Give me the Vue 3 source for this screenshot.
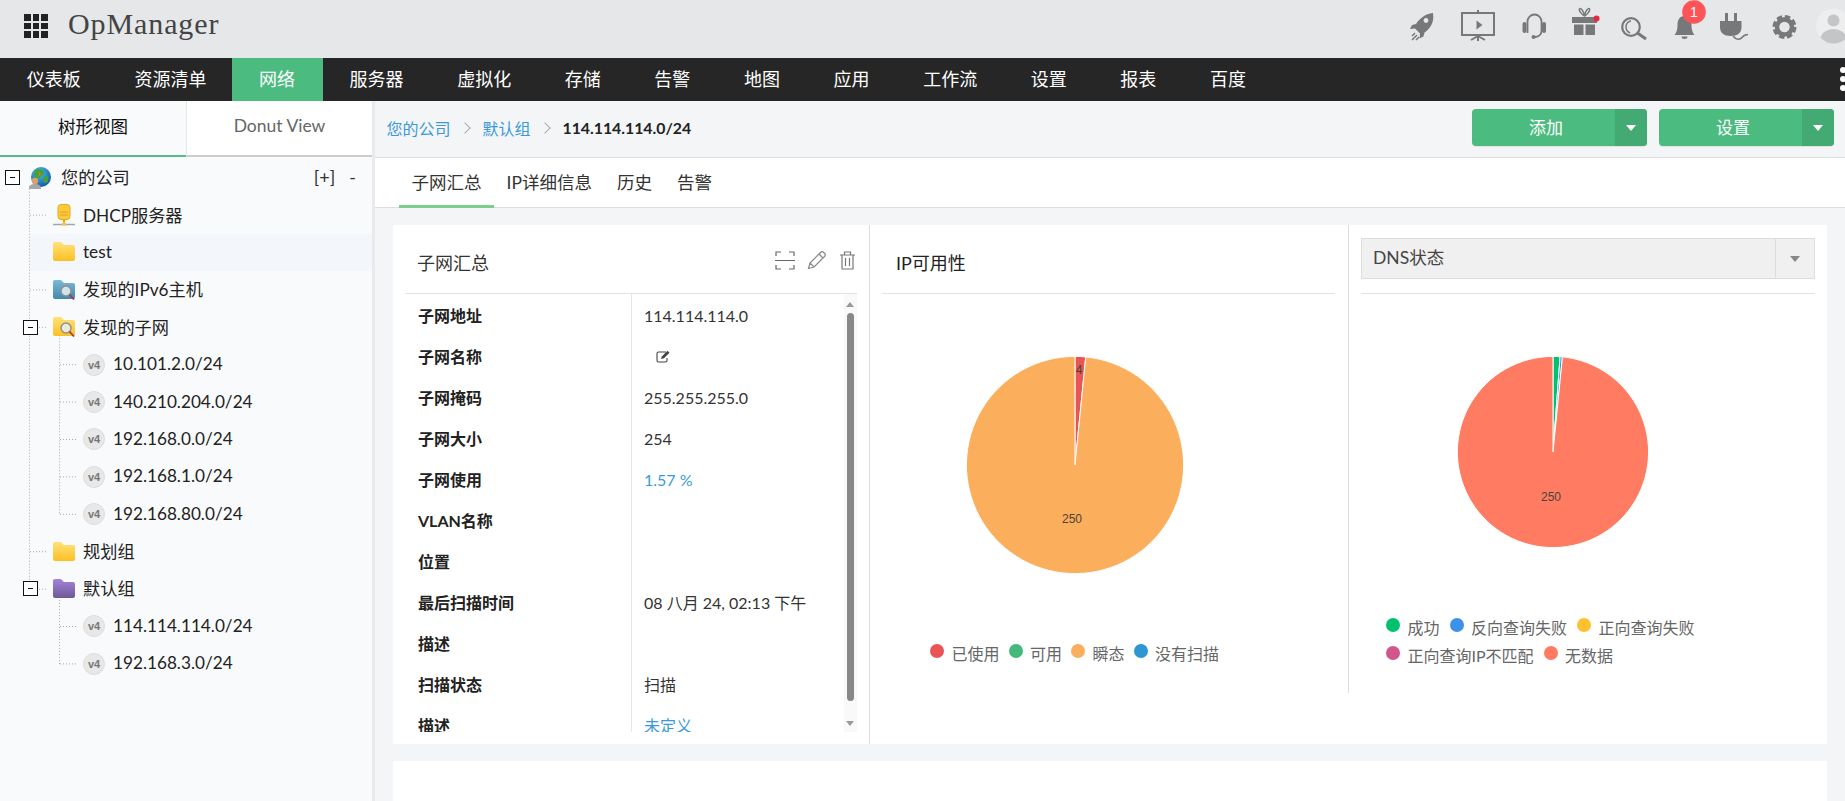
<script setup>
const navItems = ['仪表板','资源清单','网络','服务器','虚拟化','存储','告警','地图','应用','工作流','设置','报表','百度']
const RH = 37.4
const tree = [
  { t:'您的公司', lv:0, icon:'globe', box:true, actions:true },
  { t:'DHCP服务器', lv:1, icon:'dhcp' },
  { t:'test', lv:1, icon:'folder', hl:true },
  { t:'发现的IPv6主机', lv:1, icon:'search-blue' },
  { t:'发现的子网', lv:1, icon:'search-yellow', box:true },
  { t:'10.101.2.0/24', lv:2, icon:'v4' },
  { t:'140.210.204.0/24', lv:2, icon:'v4' },
  { t:'192.168.0.0/24', lv:2, icon:'v4' },
  { t:'192.168.1.0/24', lv:2, icon:'v4' },
  { t:'192.168.80.0/24', lv:2, icon:'v4' },
  { t:'规划组', lv:1, icon:'folder' },
  { t:'默认组', lv:1, icon:'folder-purple', box:true },
  { t:'114.114.114.0/24', lv:2, icon:'v4' },
  { t:'192.168.3.0/24', lv:2, icon:'v4' },
]
const cy = i => i * RH + RH / 2
const branches = tree.map((r, i) => r.lv === 0 ? null : ({ x1: r.lv === 1 ? 30 : 60, x2: r.lv === 1 ? 47 : 77, y: cy(i) })).filter(Boolean)
const rows = [
  { k:'子网地址', v:'114.114.114.0' },
  { k:'子网名称', edit:true },
  { k:'子网掩码', v:'255.255.255.0' },
  { k:'子网大小', v:'254' },
  { k:'子网使用', v:'1.57 %', link:true },
  { k:'VLAN名称' },
  { k:'位置' },
  { k:'最后扫描时间', v:'08 八月 24, 02:13 下午' },
  { k:'描述' },
  { k:'扫描状态', v:'扫描' },
  { k:'描述', v:'未定义', link:true },
]
function wedges(data, c, r) {
  const total = data.reduce((s, d) => s + d.n, 0)
  let a = 0
  return data.map(d => {
    const b = a + d.n / total * Math.PI * 2
    const p = (t) => `${(c + r * Math.sin(t)).toFixed(2)} ${(c - r * Math.cos(t)).toFixed(2)}`
    const path = `M${c} ${c}L${p(a)}A${r} ${r} 0 ${b - a > Math.PI ? 1 : 0} 1 ${p(b)}Z`
    a = b
    return { path, color: d.color }
  })
}
const pie1 = wedges([{ n:4, color:'#e95454' }, { n:250, color:'#fbae5c' }], 110, 108.6)
const pie2 = wedges([{ n:3, color:'#00c26e' }, { n:1, color:'#3d92e8' }, { n:250, color:'#ff7c62' }], 97, 95.6)
const legend1 = [['已使用','#e95454'],['可用','#45b97c'],['瞬态','#fbae5c'],['没有扫描','#2e96d3']]
const legend2 = [['成功','#00c26e'],['反向查询失败','#3d92e8'],['正向查询失败','#ffc130'],['正向查询IP不匹配','#d2568c'],['无数据','#ff7c62']]
</script>

<template>
  <div class="app">
    <header class="top">
      <div class="grid-icon"><i v-for="n in 9" :key="n"></i></div>
      <div class="brand">OpManager</div>
      <svg class="tools" viewBox="1405 0 440 58" width="440" height="58">
        <!-- rocket -->
        <path d="M1433 13c-8 1-13 5-17 11l-4 1-2 4 5-.5 5 5-.5 5 4-2 1-4c6-4 10-10 8.500-19.500z" fill="#77787a"/>
        <circle cx="1426" cy="20.500" r="2.400" fill="#e6e7e9"/>
        <path d="M1415 33l-3 3M1417 35l-5 5M1419 37l-3 3" stroke="#77787a" stroke-width="1.500" fill="none"/>
        <!-- presentation -->
        <rect x="1462" y="13" width="32" height="22" fill="none" stroke="#77787a" stroke-width="2"/>
        <path d="M1478 10v3M1478 35v6M1478 36l-7 4M1478 36l7 4" stroke="#77787a" stroke-width="2" fill="none"/>
        <path d="M1476.500 20.500l6 4.500-6 4.500z" fill="#77787a"/>
        <!-- headset -->
        <path d="M1527.500 33V21.500a7 7 0 0 1 14 0V31c0 3.500-3 6-7 6" fill="none" stroke="#77787a" stroke-width="1.800"/>
        <rect x="1522.500" y="22" width="4" height="11" rx="2" fill="#77787a"/>
        <rect x="1542" y="22" width="4" height="11" rx="2" fill="#77787a"/>
        <circle cx="1533.500" cy="37" r="2" fill="#77787a"/>
        <!-- gift -->
        <path d="M1572 17h25v6h-25zM1574 24.500h9.500v10.500h-9.500zM1585.500 24.500h9.500v10.500h-9.500z" fill="#77787a"/>
        <path d="M1584.500 16c-2-1-6-5-5-7 1-1.500 4 1 5 7 1-6 4-8.500 5-7 1 2-3 6-5 7z" fill="none" stroke="#77787a" stroke-width="1.500"/>
        <circle cx="1596.500" cy="18.500" r="3" fill="#e8273a"/>
        <!-- search -->
        <circle cx="1631" cy="27" r="8.800" fill="none" stroke="#77787a" stroke-width="2.200"/>
        <path d="M1631 21c-3 0-5 3-5 6s2 5 4 6" fill="none" stroke="#77787a" stroke-width="1.500"/>
        <path d="M1637.500 33l8.500 6" stroke="#77787a" stroke-width="3"/>
        <!-- bell -->
        <path d="M1684.500 16c-5 0-7 4-7 9 0 5-1 7-3 10h20c-2-3-3-5-3-10 0-5-2-9-7-9z" fill="#77787a"/>
        <path d="M1681.500 36.500h6a3 2.500 0 0 1-6 0z" fill="#77787a"/>
        <circle cx="1694" cy="12" r="11.800" fill="#ff5457"/>
        <text x="1694" y="17" text-anchor="middle" class="badge">1</text>
        <!-- plug -->
        <path d="M1725 13h3v8h-3zM1734 13h3v8h-3zM1720 21h21.500v6c0 6-4 9-10.750 9s-10.750-3-10.750-9z" fill="#77787a"/>
        <path d="M1733 36c3 4 7 4 9 1.500s4-3 6-3" fill="none" stroke="#77787a" stroke-width="1.600"/>
        <!-- gear -->
        <circle cx="1784.500" cy="27" r="7.500" fill="none" stroke="#77787a" stroke-width="4.500"/>
        <circle cx="1784.500" cy="27" r="10.500" fill="none" stroke="#77787a" stroke-width="3" stroke-dasharray="5.500 2.750"/>
        <!-- avatar -->
        <clipPath id="av"><circle cx="1833.500" cy="26" r="17.500"/></clipPath>
        <circle cx="1833.500" cy="26" r="17.500" fill="#eeeeef"/>
        <g clip-path="url(#av)" fill="#c4c5c6">
          <circle cx="1833.500" cy="20.500" r="6"/>
          <ellipse cx="1833.500" cy="39" rx="13" ry="10"/>
        </g>
      </svg>
    </header>

    <nav class="nav">
      <a v-for="n in navItems" :key="n" class="nav-item" :class="{ active: n === '网络' }">{{ n }}</a>
      <div class="more"><i></i><i></i><i></i></div>
    </nav>

    <div class="body">
      <aside class="side">
        <div class="side-tabs">
          <div class="stab on">树形视图</div>
          <div class="stab">Donut View</div>
        </div>
        <div class="tree">
          <svg class="tree-lines" width="372" height="530">
            <g stroke="#aaa" stroke-width="1" stroke-dasharray="1 2" fill="none">
              <path :d="`M29.500 ${cy(0) + 8}V${cy(11)}`"/>
              <path :d="`M59.500 ${cy(4) + 8}V${cy(9)}`"/>
              <path :d="`M59.500 ${cy(11) + 8}V${cy(13)}`"/>
              <path v-for="(b, i) in branches" :key="i" :d="`M${b.x1} ${b.y}H${b.x2}`"/>
            </g>
          </svg>
          <div v-for="r in tree" :key="r.t" class="row" :class="['lv' + r.lv, { hl: r.hl }]">
            <span v-if="r.box" class="box"><i></i></span>
            <svg v-if="r.icon === 'globe'" class="ic globe" viewBox="0 0 22 22" width="22" height="22">
              <defs>
                <radialGradient id="gl" cx=".4" cy=".3" r=".8"><stop offset="0" stop-color="#55c0e8"/><stop offset="1" stop-color="#0b4fa0"/></radialGradient>
              </defs>
              <circle cx="12" cy="10" r="10" fill="url(#gl)"/>
              <path d="M7 2.500c3-1 7-.5 8 3 0 3-3 3-4 5.500-2 2-6 0-6-3 0-2 1-4.500 2-5.500zM16 9c3 0 4 2 3 5-1 2-3 3-4 1-1-2 0-5 1-6z" fill="#3fa53a"/>
              <path d="M10 5c1 1 1 3 0 4" fill="none" stroke="#d8792a" stroke-width="1.500"/>
              <circle cx="6" cy="14" r="3.200" fill="#d9a26d"/>
              <path d="M0 22c0-4 2.500-5 6-5s6 1 6 5z" fill="#a5a6a8"/>
            </svg>
            <svg v-else-if="r.icon === 'dhcp'" class="ic" viewBox="0 0 22 22" width="22" height="22">
              <rect x="5" y="0.500" width="12" height="15" rx="3" fill="#ffc93c" stroke="#eaa91c"/>
              <path d="M7 8h8M7 11h8" stroke="#e0a21c" stroke-width="1"/>
              <path d="M11 16v3" stroke="#e0a21c" stroke-width="2"/>
              <path d="M0 20.500h22" stroke="#9aa" stroke-width="1.500"/>
              <circle cx="11" cy="20" r="2" fill="#ffc93c"/>
            </svg>
            <svg v-else-if="r.icon === 'v4'" class="ic" viewBox="0 0 22 22" width="22" height="22">
              <circle cx="11" cy="11" r="10.500" fill="#e8e8e8" stroke="#dcdcdc"/>
              <text x="11" y="15" text-anchor="middle" class="v4">v4</text>
            </svg>
            <svg v-else class="ic" viewBox="0 0 22 20" width="22" height="20">
              <defs>
                <linearGradient id="fy" x1="0" y1="0" x2="0" y2="1"><stop offset="0" stop-color="#ffe27a"/><stop offset="1" stop-color="#fdbf22"/></linearGradient>
                <linearGradient id="fb" x1="0" y1="0" x2="0" y2="1"><stop offset="0" stop-color="#7cb9d6"/><stop offset="1" stop-color="#3f88ae"/></linearGradient>
                <linearGradient id="fp" x1="0" y1="0" x2="0" y2="1"><stop offset="0" stop-color="#a583dc"/><stop offset="1" stop-color="#6d5a96"/></linearGradient>
              </defs>
              <path d="M0 2q0-2 2-2h6l3 3h9q2 0 2 2v12q0 2-2 2H2q-2 0-2-2z"
                :fill="r.icon === 'search-blue' ? 'url(#fb)' : r.icon === 'folder-purple' ? 'url(#fp)' : 'url(#fy)'"/>
              <template v-if="r.icon.startsWith('search')">
                <circle cx="13" cy="11" r="5" fill="#e8eef2" fill-opacity=".85" stroke="#8d8f92" stroke-width="1.400"/>
                <path d="M16.500 14.500l4.500 5" stroke="#a03a55" stroke-width="1.800"/>
              </template>
            </svg>
            <span class="label">{{ r.t }}</span>
            <span v-if="r.actions" class="acts"><span>[+]</span><span>-</span></span>
          </div>
        </div>
      </aside>

      <main class="main">
        <div class="crumb">
          <a class="lnk">您的公司</a><span class="sep"></span>
          <a class="lnk">默认组</a><span class="sep"></span>
          <b class="cur">114.114.114.0/24</b>
          <div class="btns">
            <div class="btn"><span class="btn-t">添加</span><span class="btn-a"><i></i></span></div>
            <div class="btn"><span class="btn-t">设置</span><span class="btn-a"><i></i></span></div>
          </div>
        </div>
        <div class="tabs">
          <a class="tab on">子网汇总</a>
          <a class="tab">IP详细信息</a>
          <a class="tab">历史</a>
          <a class="tab">告警</a>
        </div>
        <div class="content">
          <section class="card">
            <div class="panel p1">
              <div class="head">
                <span class="title">子网汇总</span>
                <div class="head-ic">
                  <svg viewBox="0 0 20 19" width="20" height="19" fill="none" stroke="#666" stroke-width="1.200">
                    <path d="M1 5V1h5M14 1h5v4M1 14v4h5M14 18h5v-4M0 9.500h20"/>
                  </svg>
                  <svg viewBox="0 0 20 20" width="20" height="20" fill="none" stroke="#888" stroke-width="1.200">
                    <path d="M1.500 18.500l1.500-5.500L13.500 2.500q1.500-1.500 3-.2l1.200 1.200q1.300 1.500-.2 3L7 17zM3 13l4 4M12 4l4 4"/>
                  </svg>
                  <svg viewBox="0 0 17 19" width="17" height="19" fill="none" stroke="#777" stroke-width="1.200">
                    <path d="M1 4h15M5.500 4V1h6v3M3 4v14h11V4M6.500 7v8M10.500 7v8"/>
                  </svg>
                </div>
              </div>
              <div class="table">
                <div v-for="(r, i) in rows" :key="i" class="tr">
                  <div class="th">{{ r.k }}</div>
                  <div class="td" :class="{ link: r.link }">
                    <svg v-if="r.edit" class="edit" viewBox="0 0 15 13" width="15" height="13" fill="none" stroke="#444" stroke-width="1.100">
                      <path d="M10 2H2.500Q1 2 1 3.500v7Q1 12 2.500 12h7q1.500 0 1.500-1.500V8"/>
                      <path d="M5 9l.8-2.600L11.500.8l2 2L8 8.200z" fill="#444" stroke="none"/>
                    </svg>
                    <template v-else>{{ r.v }}</template>
                  </div>
                </div>
                <div class="scroll"><i class="up"></i><i class="thumb"></i><i class="down"></i></div>
              </div>
            </div>
            <div class="panel p2">
              <div class="head"><span class="title t2">IP可用性</span></div>
              <svg class="pie pie1" viewBox="0 0 220 220" width="220" height="220">
                <path v-for="(w, i) in pie1" :key="i" :d="w.path" :fill="w.color" stroke="#fff" stroke-width="1"/>
                <text x="114" y="19" class="pl" text-anchor="middle">4</text>
                <text x="107" y="168" class="pl" text-anchor="middle">250</text>
              </svg>
              <div class="legend l1">
                <span v-for="l in legend1" :key="l[0]" class="li"><i :style="{ background: l[1] }"></i>{{ l[0] }}</span>
              </div>
            </div>
            <div class="panel p3">
              <div class="head h3">
                <div class="select"><span>DNS状态</span><b><i></i></b></div>
              </div>
              <svg class="pie pie2" viewBox="0 0 194 194" width="194" height="194">
                <path v-for="(w, i) in pie2" :key="i" :d="w.path" :fill="w.color" stroke="#fff" stroke-width="1"/>
                <text x="95" y="146" class="pl" text-anchor="middle">250</text>
              </svg>
              <div class="legend l2">
                <span v-for="l in legend2" :key="l[0]" class="li"><i :style="{ background: l[1] }"></i>{{ l[0] }}</span>
              </div>
            </div>
          </section>
          <section class="card2"></section>
        </div>
      </main>
    </div>
  </div>
</template>

<style>
html, body { margin: 0; background: #f4f5f7; overflow: hidden; }
</style>

<style scoped>
.app { width: 1845px; height: 801px; overflow: hidden; display: flex; flex-direction: column; font-family: Lato, "Noto Sans CJK SC", sans-serif; color: #222; }
.top { height: 58px; flex: none; background: #e6e7e9; display: flex; align-items: center; }
.grid-icon { width: 24px; height: 24px; margin-left: 24px; margin-top: -6px; display: grid; grid-template-columns: repeat(3, 1fr); gap: 2px; }
.grid-icon i { background: #222; }
.brand { margin-left: 20px; margin-top: -10px; font-family: "Liberation Serif", serif; font-size: 30px; color: #444; letter-spacing: .9px; }
.tools { margin-left: auto; flex: none; }
.badge { font: 14px "Liberation Sans", sans-serif; fill: #fff; }
.nav { height: 43px; flex: none; background: #262626; display: flex; position: relative; }
.nav-item { padding: 0 26.800px; line-height: 43px; color: #fff; font-size: 18px; }
.nav-item.active { background: #4cbb80; margin-left: -1px; padding-right: 27.800px; }
.more { position: absolute; right: -1px; top: 9px; display: flex; flex-direction: column; gap: 3px; }
.more i { width: 6px; height: 6px; border-radius: 50%; background: #fff; }
.body { flex: 1; display: flex; min-height: 0; }
.side { width: 372px; flex: none; background: #f9fafc; border-right: 3px solid #e9eaec; display: flex; flex-direction: column; }
.side-tabs { display: flex; height: 56px; flex: none; margin-bottom: 2px; }
.stab { width: 50%; display: flex; align-items: center; justify-content: center; padding-bottom: 6px; box-sizing: border-box; font-size: 17.500px; color: #666; background: #fff; border-bottom: 2px solid #ccc; border-left: 1px solid #e6e6e6; }
.stab.on { background: #f9fafc; color: #111; border-bottom: 2px solid #5cb98a; border-left: 0; }
.tree { position: relative; }
.tree-lines { position: absolute; left: 0; top: 0; }
.row { height: 37.400px; display: flex; align-items: center; position: relative; font-size: 17.200px; color: #222; }
.row.lv0 { margin-left: 5px; }
.row.lv1 { margin-left: 30px; padding-left: 23px; }
.row.lv2 { margin-left: 60px; padding-left: 23px; }
.row.hl { background: #f3f6fa; }
.ic { flex: none; }
.label { margin-left: 8px; white-space: nowrap; margin-top: -2px; }
.row.lv0 .label { margin-left: 10px; }
.globe { margin-left: 9px; }
.box { width: 13px; height: 13px; border: 1px solid #111; background: #fff; display: flex; align-items: center; justify-content: center; flex: none; }
.box i { width: 5px; height: 1px; background: #111; }
.row.lv1 .box { position: absolute; left: -7px; top: 11px; }
.v4 { font: bold 11px "Liberation Sans", sans-serif; fill: #777; }
.acts { margin-left: auto; margin-right: 16px; display: flex; gap: 14px; color: #333; font-size: 18px; margin-top: -2px; }
.main { flex: 1; min-width: 0; display: flex; flex-direction: column; }
.crumb { flex: none; border-bottom: 1px solid #ddd; display: flex; align-items: center; padding: 0 0 3px 11.500px; height: 53px; font-size: 16px; }
.lnk { color: #3a9ad9; }
.sep { width: 7px; height: 7px; margin: 0 14px 0 10px; border-top: 1px solid #aaa; border-right: 1px solid #aaa; transform: rotate(45deg); }
.cur { color: #222; font-size: 15.800px; }
.btns { margin-left: auto; margin-right: 11px; display: flex; gap: 12px; }
.btn { width: 175px; height: 37px; border-radius: 4px; background: #4cbb80; color: #fff; display: flex; overflow: hidden; box-shadow: 0 1px 1px rgba(0,0,0,.08); }
.btn-t { flex: 1; text-align: center; line-height: 38px; font-size: 17px; padding-left: 5px; }
.btn-a { width: 32px; background: #44aa74; display: flex; align-items: center; justify-content: center; }
.btn-a i { border: 5px solid transparent; border-top: 6px solid #fff; border-bottom: 0; }
.tabs { height: 49px; flex: none; background: #fff; border-bottom: 1px solid #ddd; display: flex; padding-left: 24px; }
.tab { padding: 0 12.500px; line-height: 50px; font-size: 17.500px; color: #333; height: 50px; box-sizing: border-box; }
.tab.on { border-bottom: 3px solid #7bcf8b; }
.content { flex: 1; min-height: 0; padding: 17px 18px 0; display: flex; flex-direction: column; gap: 17px; }
.card { height: 519px; flex: none; background: #fff; display: flex; }
.card2 { flex: 1; background: #fff; }
.panel { flex: none; box-sizing: border-box; }
.p1 { width: 477px; border-right: 1px solid #ddd; padding: 0 12px; }
.p2 { width: 479px; height: 468px; border-right: 1px solid #ddd; padding: 0 13px 0 12px; }
.p3 { flex: 1; padding: 0 12px; }
.head { height: 69px; box-sizing: border-box; border-bottom: 1px solid #e2e2e2; display: flex; align-items: center; padding-top: 5px; }
.title { padding-left: 12px; font-size: 18px; color: #333; }
.t2 { color: #222; padding-left: 14px; }
.head-ic { margin-left: auto; display: flex; align-items: center; gap: 12px; margin-top: -3px; padding-right: 1px; }
.h3 { align-items: flex-start; padding-top: 13px; }
.select { flex: 1; height: 41px; box-sizing: border-box; background: #f0f0f0; border: 1px solid #ddd; display: flex; align-items: center; font-size: 17.500px; color: #444; }
.select span { flex: 1; padding-left: 11px; margin-top: -4px; }
.select b { width: 38px; height: 100%; border-left: 1px solid #ddd; display: flex; align-items: center; justify-content: center; }
.select b i { border: 5px solid transparent; border-top: 6px solid #888; border-bottom: 0; }
.table { position: relative; height: 438px; overflow: hidden; }
.tr { height: 41px; display: flex; }
.th { width: 227px; box-sizing: border-box; border-right: 1px solid #e6e6e6; padding: 1px 0 0 13px; line-height: 41px; font-weight: 700; font-size: 16px; color: #222; }
.td { padding: 1px 0 0 12px; line-height: 41px; font-size: 16px; color: #333; display: flex; align-items: center; }
.td.link { color: #3a9ad9; }
.edit { margin-left: 12px; }
.scroll { position: absolute; right: 0; top: 0; bottom: 0; width: 13px; background: #f9f9f9; }
.scroll i { position: absolute; display: block; }
.up { left: 2px; top: 8px; border: 4.500px solid transparent; border-bottom: 5px solid #999; border-top: 0; }
.down { left: 2px; bottom: 6px; border: 4.500px solid transparent; border-top: 5px solid #999; border-bottom: 0; }
.thumb { left: 3px; top: 19px; width: 7px; height: 388px; border-radius: 3.500px; background: #888; }
.pie { display: block; }
.pie1 { margin: 61px 0 0 83px; }
.pie2 { margin: 61px 0 0 95px; }
.pl { font: 12px "Liberation Sans", sans-serif; fill: #4d4236; }
.legend { display: flex; flex-wrap: wrap; font-size: 16px; color: #666; }
.l1 { margin: 68px 0 0 48px; }
.l2 { margin: 64px 0 0 25px; width: 400px; }
.li { display: inline-flex; align-items: center; height: 28px; margin-right: 10px; white-space: nowrap; }
.li i { width: 14px; height: 14px; border-radius: 50%; margin-right: 7.500px; margin-top: -4px; }
.l1 .li { height: 20px; margin-right: 9px; }
</style>
